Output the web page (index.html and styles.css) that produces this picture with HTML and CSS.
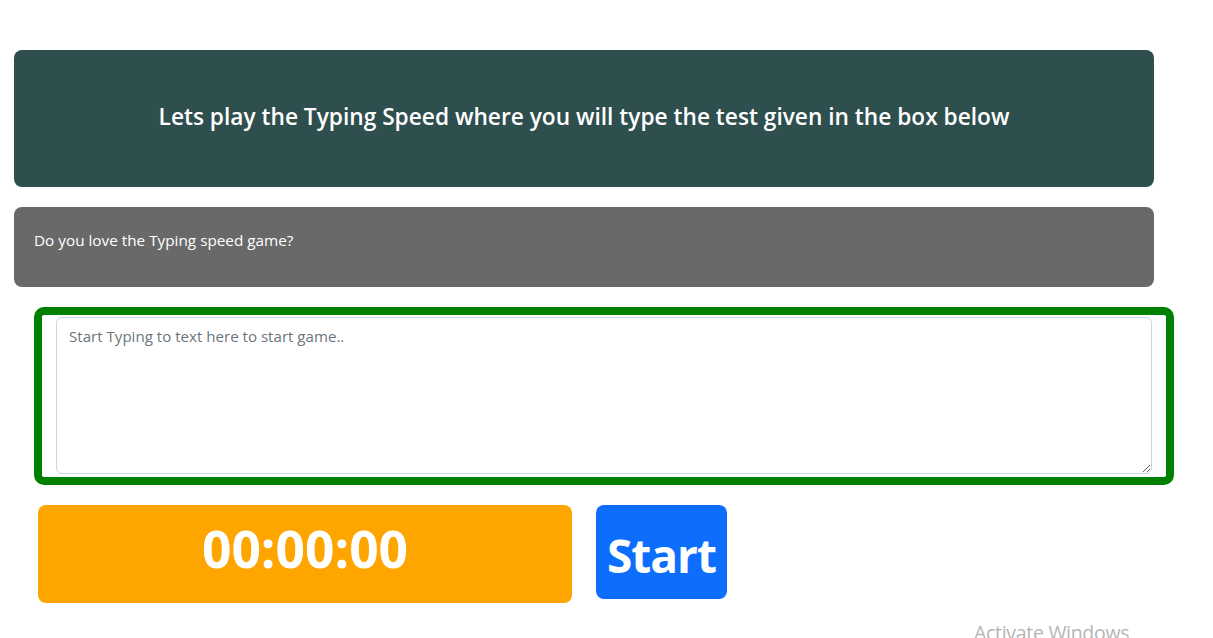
FILE: index.html
```html
<!DOCTYPE html>
<html lang="en">
<head>
<meta charset="utf-8">
<title>Typing Speed</title>
<link rel="stylesheet" href="styles.css">
</head>
<body>
<main class="page">
  <div class="banner">
    <h1 class="banner-title">Lets play the Typing Speed where you will type the test given in the box below</h1>
  </div>
  <div class="prompt">
    <p class="prompt-text">Do you love the Typing speed game?</p>
  </div>
  <div class="typing-wrap">
    <textarea class="typing-area" placeholder="Start Typing to text here to start game.."></textarea>
  </div>
  <div class="controls">
    <div class="timer">00:00:00</div>
    <button class="start-btn">Start</button>
  </div>
</main>
<div class="watermark">Activate Windows</div>
</body>
</html>
```
FILE: styles.css
```css
* { box-sizing: border-box; }
html, body { margin: 0; padding: 0; background: #fff; }
body {
  font-family: "Open Sans", "Noto Sans", sans-serif;
  color: #212529;
  overflow: hidden;
  height: 638px;
  position: relative;
}
.page {
  padding-top: 50px;
  display: flex;
  flex-direction: column;
  align-items: flex-start;
}
.banner {
  margin-left: 14px;
  width: 1140px;
  height: 137px;
  background: #2f4f4f;
  border-radius: 8px;
  display: flex;
  align-items: center;
  justify-content: center;
  padding-bottom: 4px;
}
.banner-title {
  margin: 0;
  color: #fff;
  font-size: 22.7px;
  font-weight: 600;
}
.prompt {
  margin-top: 20px;
  margin-left: 14px;
  width: 1140px;
  height: 80px;
  background: #696969;
  border-radius: 8px;
  padding: 22px 20px 0;
}
.prompt-text {
  margin: 0;
  color: #fff;
  font-size: 15.3px;
  line-height: 22px;
}
.typing-wrap {
  margin-top: 20px;
  margin-left: 34px;
  width: 1140px;
  height: 178px;
  border: 8px solid #008000;
  border-radius: 10px;
  padding: 2px 14px 3px;
}
.typing-area {
  display: block;
  width: 100%;
  height: 100%;
  border: 1px solid #ced4da;
  border-radius: 6px;
  padding: 8px 12px;
  font-family: "Open Sans", "Noto Sans", sans-serif;
  font-size: 15.1px;
  color: #212529;
  resize: vertical;
  outline: none;
}
.typing-area::placeholder { color: #6c757d; }
.controls {
  margin-top: 20px;
  margin-left: 38px;
  display: flex;
  align-items: flex-start;
  gap: 24px;
}
.timer {
  width: 534px;
  height: 98px;
  background: #ffa500;
  border-radius: 8px;
  color: #fff;
  font-weight: 700;
  font-size: 51.5px;
  display: flex;
  align-items: center;
  justify-content: center;
  padding-bottom: 12px;
}
.start-btn {
  width: 131px;
  height: 94px;
  background: #0d6efd;
  border: none;
  border-radius: 8px;
  color: #fff;
  font-family: "Open Sans", "Noto Sans", sans-serif;
  font-weight: 700;
  font-size: 46px;
  letter-spacing: -1px;
  display: flex;
  align-items: center;
  justify-content: center;
  padding: 6px 0 0;
}
.watermark {
  position: absolute;
  left: 974px;
  top: 619px;
  color: #b5b5b5;
  font-size: 19.5px;
  font-family: "Open Sans", "Noto Sans", sans-serif;
  letter-spacing: -0.3px;
}
```
